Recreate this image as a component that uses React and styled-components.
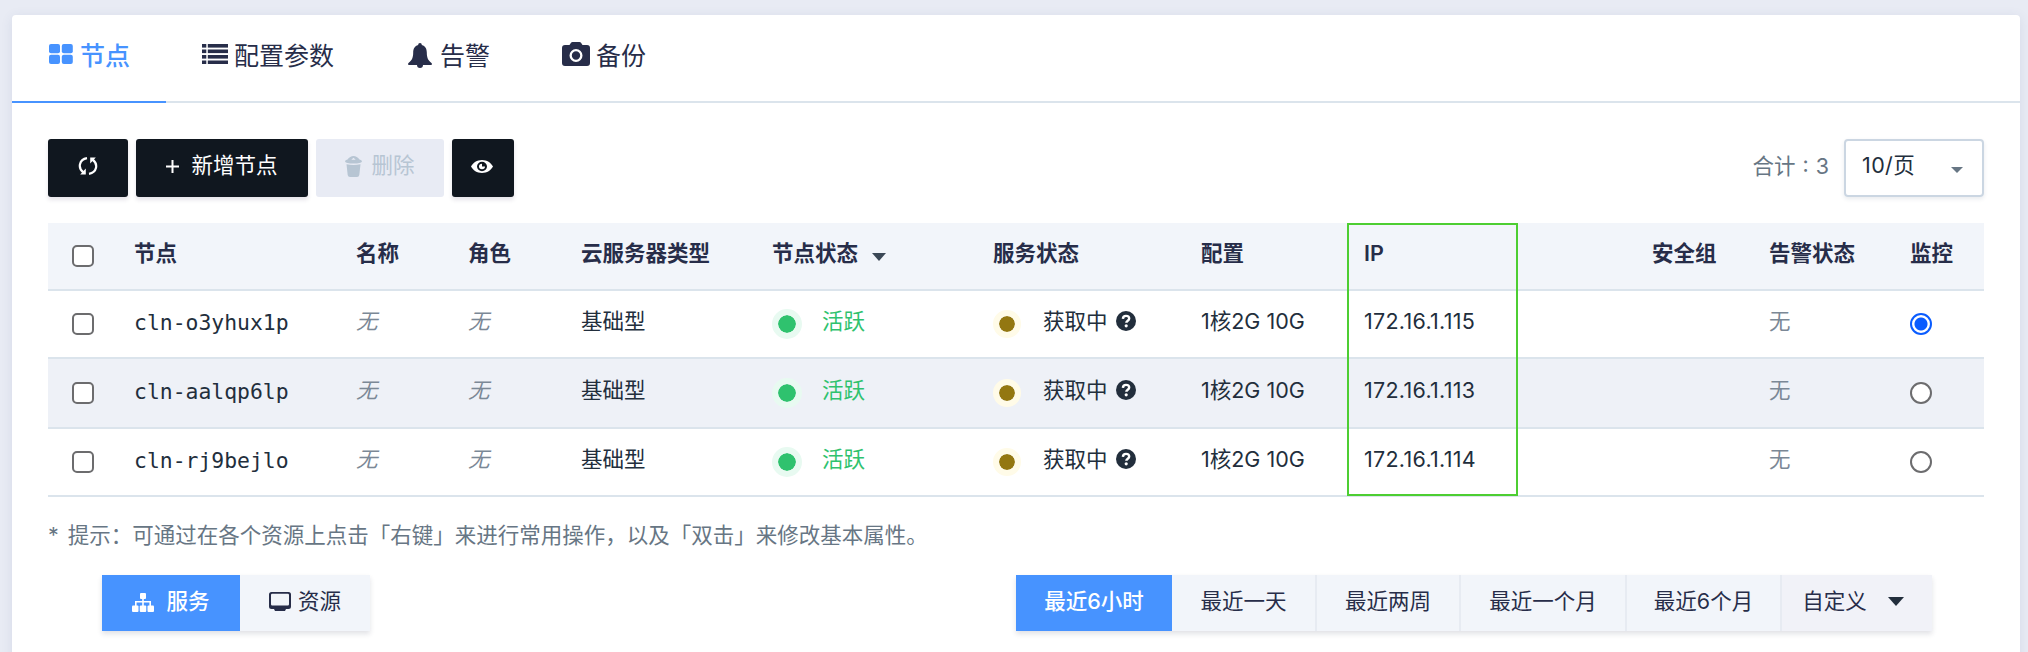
import React from 'react';
import styled, { createGlobalStyle, css } from 'styled-components';

const Global = createGlobalStyle`
  *, *::before, *::after { box-sizing: border-box; }
  body {
    margin: 0;
    height: 652px;
    overflow: hidden;
    background: #e8ebf4;
    color: #222e3c;
    font: 21.5px/30px Inter, "Noto Sans CJK SC", sans-serif;
  }
`;

const Panel = styled.main`
  height: 660px;
  margin: 15px 8px 0 12px;
  background: #fff;
  border-radius: 4px;
  box-shadow: 0 2px 12px rgba(60, 80, 130, 0.1);
`;

const Tabs = styled.nav`
  display: flex;
  height: 88px;
  border-bottom: 2px solid #dbe4ec;
`;

const Tab = styled.a`
  display: flex;
  align-items: center;
  gap: ${(p) => p.$gap}px;
  width: ${(p) => p.$width}px;
  height: 88px;
  padding: 0 0 4px 36px;
  font-size: 25px;
  white-space: nowrap;
  color: ${(p) => (p.$active ? '#4793ff' : '#272d49')};
  font-weight: ${(p) => (p.$active ? 500 : 400)};
  border-bottom: 2px solid ${(p) => (p.$active ? '#4793ff' : 'transparent')};
`;

const Toolbar = styled.div`
  display: flex;
  gap: 8px;
  padding: 36px 36px 0;
`;

const Button = styled.button`
  display: flex;
  align-items: center;
  justify-content: center;
  gap: ${(p) => p.$gap || 0}px;
  width: ${(p) => p.$width}px;
  height: 58px;
  padding: 0 ${(p) => p.$right || 0}px 4px 0;
  border: 0;
  border-radius: 3px;
  font: inherit;
  color: ${(p) => (p.$disabled ? '#b7c5d3' : '#fff')};
  background: ${(p) => (p.$disabled ? '#e8ebf4' : '#10171f')};
  box-shadow: ${(p) => (p.$disabled ? 'none' : '0 3px 4px rgba(50, 30, 80, 0.12)')};
`;

const Label = styled.span`
  padding-bottom: 2px;
`;

const Paging = styled.div`
  display: flex;
  align-items: center;
  gap: 15px;
  margin-left: auto;
  color: #677684;
`;

const Total = styled.span`
  padding-bottom: 5px;
  word-spacing: 1px;
`;

const Select = styled.div`
  display: flex;
  align-items: center;
  justify-content: space-between;
  width: 140px;
  height: 58px;
  padding: 0 19px 6px 16px;
  color: #222e3c;
  letter-spacing: 0.4px;
  border: 2px solid #cbd6e2;
  border-radius: 4px;
  box-shadow: 0 2px 4px rgba(40, 60, 90, 0.1);
`;

const Caret = styled.i`
  width: 0;
  height: 0;
  border: solid transparent;
  border-width: ${(p) => p.$h}px ${(p) => p.$w / 2}px 0;
  border-top-color: ${(p) => p.$color};
  margin: ${(p) => p.$margin};
`;

const TableWrap = styled.section`
  position: relative;
  margin: 26px 36px 0;
`;

const Row = styled.div`
  display: grid;
  grid-template-columns: 86px 222px 112px 113px 191px 221px 208px 163px 288px 117px 141px 1fr;
  align-items: center;
  height: ${(p) => p.$height}px;
  background: ${(p) => p.$bg};
  border-bottom: 2px solid #dbe4ec;
  white-space: nowrap;
  ${(p) => p.$head && css`
    color: #272d49;
    font-weight: 600;
  `}
`;

const Cell = styled.div`
  display: flex;
  align-items: center;
  height: 30px;
  margin-top: -7px;
`;

const Address = styled(Cell)`
  letter-spacing: 0.28px;
`;

const BoxCell = styled(Cell)`
  margin-top: 0;
  padding-left: ${(p) => p.$pad || 0}px;
`;

const Name = styled(Cell)`
  margin-top: -2px;
  font-family: "DejaVu Sans Mono", monospace;
  font-size: 21.4px;
`;

const None = styled(Cell)`
  color: #7b8896;
  font-style: ${(p) => (p.$italic ? 'italic' : 'normal')};
`;

const Check = styled.span`
  width: 22px;
  height: 22px;
  border: 2px solid #6c6c6e;
  border-radius: 5px;
  background: #fff;
`;

const Radio = styled(Check)`
  border-radius: 50%;
  ${(p) => p.$on && css`
    border-color: #0a5cff;
    background: radial-gradient(circle, #0a5cff 6px, #fff 7px);
  `}
`;

const StatusDot = styled.span`
  flex: none;
  width: ${(p) => p.$size}px;
  height: ${(p) => p.$size}px;
  margin: 6px ${(p) => p.$gap}px 0 0;
  border-radius: 50%;
  border: 6px solid ${(p) => p.$halo};
  background: ${(p) => p.$color};
  background-clip: padding-box;
`;

const Active = styled.span`
  color: #2fc26e;
`;

const Highlight = styled.div`
  position: absolute;
  top: 0;
  left: 1299px;
  width: 171px;
  height: 273px;
  border: 2px solid #4dce32;
`;

const Tip = styled.p`
  display: flex;
  gap: 9px;
  margin: 23px 36px 0;
  height: 30px;
  color: #677684;
  white-space: pre;
`;

const Charts = styled.div`
  display: flex;
  justify-content: space-between;
  margin: 25px 88px 0 90px;
`;

const Segments = styled.div`
  display: flex;
  box-shadow: 0 3px 5px rgba(40, 50, 80, 0.14);
`;

const Segment = styled.div`
  display: flex;
  align-items: center;
  justify-content: center;
  gap: ${(p) => p.$gap || 0}px;
  width: ${(p) => p.$width}px;
  height: 56px;
  padding: 0 ${(p) => p.$right || 0}px 4px 0;
  white-space: nowrap;
  color: ${(p) => (p.$active ? '#fff' : '#272d49')};
  font-weight: ${(p) => (p.$active ? 500 : 400)};
  background: ${(p) => (p.$active ? '#4793ff' : p.$menu ? '#f1f2f8' : '#f2f5fa')};
  border-left: ${(p) => (p.$divider ? '2px solid #e7ebf2' : '0')};
`;

const Svg = styled.svg`
  display: block;
  flex: none;
  fill: currentColor;
  margin: ${(p) => p.$margin || 0};
`;

const GridIcon = () => (
  <Svg width="24" height="20" viewBox="0 0 24 20" $margin="-5px 0 0 1px">
    <rect width="11" height="9.200" rx="2" /><rect x="12.800" width="11" height="9.200" rx="2" />
    <rect y="10.800" width="11" height="9.200" rx="2" /><rect x="12.800" y="10.800" width="11" height="9.200" rx="2" />
  </Svg>
);
const ListIcon = () => (
  <Svg width="26" height="20" viewBox="0 0 26 20" $margin="-5px 0 0">
    {[0, 5.5, 11, 16.5].map((y) => (
      <React.Fragment key={y}><rect y={y} width="4.300" height="3.600" /><rect x="5.800" y={y} width="20.200" height="3.600" /></React.Fragment>
    ))}
  </Svg>
);
const BellIcon = () => (
  <Svg width="24" height="25" viewBox="0 0 24 25" $margin="-2px 0 0">
    <path d="M12 0c1.200 0 1.800.8 1.800 2 3.600 1 5 4 5 7.500 0 5.500 1.500 8 4.700 10.500.8.800.4 2-.7 2H15a3 3 0 0 1-6 0H1.200C.1 22-.3 20.800.5 20 3.700 17.500 5.200 15 5.200 9.500c0-3.500 1.400-6.500 5-7.500 0-1.200.6-2 1.800-2z" />
  </Svg>
);
const CameraIcon = () => (
  <Svg width="28" height="24" viewBox="0 0 28 24" $margin="-4px 0 0">
    <path fillRule="evenodd" d="M3 3h4.500L9 .8Q9.500 0 10.500 0h7q1 0 1.500.8L20.500 3H25q3 0 3 3v15q0 3-3 3H3q-3 0-3-3V6q0-3 3-3zM14 7a6.500 6.500 0 1 0 0 13 6.500 6.500 0 1 0 0-13zM14 9.300a4.200 4.200 0 1 1 0 8.400 4.200 4.200 0 1 1 0-8.400z" />
  </Svg>
);
const RefreshIcon = () => (
  <Svg width="20" height="18" viewBox="0 0 20 18">
    <g fill="none" stroke="currentColor" strokeWidth="2.200">
      <path d="M9 1.200C1 2.500-.5 11 5.500 15.500M11 16.800C19 15.500 20.500 7 14.500 2.500" />
    </g>
    <path d="M2.200 17.500H7.800V11.500zM17.800.5H12.200V6.500z" />
  </Svg>
);
const PlusIcon = () => (
  <Svg width="13" height="13" viewBox="0 0 13 13"><path d="M5.500 0h2v5.500H13v2H7.500V13h-2V7.500H0v-2h5.500z" /></Svg>
);
const TrashIcon = () => (
  <Svg width="17" height="21" viewBox="0 0 17 21">
    <path fillRule="evenodd" d="M0 5.500q0-1.500 2.500-2Q5 0 8.500 0T14.500 3.500q2.500.5 2.500 2Q16 7.500 8.500 7.500T0 5.500zM6.300 3.700h4.400L8.500 1.800zM1.500 8.300Q8.500 9.600 15.500 8.300L14.300 19q-.3 2-2.300 2H5q-2 0-2.300-2z" />
  </Svg>
);
const EyeIcon = () => (
  <Svg width="22" height="13" viewBox="0 0 22 14" preserveAspectRatio="none">
    <path fillRule="evenodd" d="M11 0c5 0 9 3 11 7-2 4-6 7-11 7S2 11 0 7c2-4 6-7 11-7zM11 2a5 5 0 1 0 0 10 5 5 0 1 0 0-10zM11 4v3h3a3 3 0 1 1-3-3z" />
  </Svg>
);
const HelpIcon = () => (
  <Svg width="20" height="20" viewBox="0 0 20 20" $margin="1px 0 0 8px">
    <circle cx="10" cy="10" r="10" />
    <path d="M6.900 7.900C7 5.800 8.300 4.900 10 4.900s3.200 1 3.200 2.600c0 2.200-2.900 2.200-2.900 4.300" fill="none" stroke="#fff" strokeWidth="2.400" />
    <circle cx="10.200" cy="14.800" r="1.600" fill="#fff" />
  </Svg>
);
const SitemapIcon = () => (
  <Svg width="22" height="19" viewBox="0 0 22 19" $margin="3px 0 0">
    <rect x="8" width="6" height="6" rx="1" />
    <path d="M10.200 5h1.600v3H19v5h-1.600V9.600h-5.600V13h-1.600V9.600H4.600V13H3V8h7.200z" />
    <rect y="12.500" width="6.500" height="6.500" rx="1" /><rect x="7.750" y="12.500" width="6.500" height="6.500" rx="1" /><rect x="15.500" y="12.500" width="6.500" height="6.500" rx="1" />
  </Svg>
);
const MonitorIcon = () => (
  <Svg width="22" height="19" viewBox="0 0 22 19" $margin="1px 0 0">
    <path fillRule="evenodd" d="M2.500 0h17Q22 0 22 2.500v12q0 2.500-2.500 2.500H17l-1 2H6l-1-2H2.500Q0 17 0 14.500v-12Q0 0 2.500 0zM3.200 1.800Q2 1.800 2 3v9.300q0 1.200 1.200 1.200h15.600q1.200 0 1.200-1.200V3q0-1.200-1.200-1.200z" />
  </Svg>
);

const nodes = [
  { id: 'cln-o3yhux1p', ip: '172.16.1.115', height: 68, on: true },
  { id: 'cln-aalqp6lp', ip: '172.16.1.113', height: 70, bg: '#eef1f7' },
  { id: 'cln-rj9bejlo', ip: '172.16.1.114', height: 68 },
];

const ranges = [
  ['最近一天', 143], ['最近两周', 144], ['最近一个月', 166], ['最近6个月', 155],
];

export default function App() {
  return (
    <>
      <Global />
      <Panel>
        <Tabs>
          <Tab $active $gap={7} $width={154}><GridIcon />节点</Tab>
          <Tab $gap={6} $width={206}><ListIcon />配置参数</Tab>
          <Tab $gap={8} $width={154}><BellIcon />告警</Tab>
          <Tab $gap={6} $width={160}><CameraIcon />备份</Tab>
        </Tabs>
        <Toolbar>
          <Button $width={80}><RefreshIcon /></Button>
          <Button $width={172} $gap={12}><PlusIcon /><Label>新增节点</Label></Button>
          <Button $width={128} $gap={9} $disabled><TrashIcon /><Label>删除</Label></Button>
          <Button $width={62} $right={3}><EyeIcon /></Button>
          <Paging>
            <Total>合计 : 3</Total>
            <Select>10/页<Caret $w={13} $h={6} $color="#677684" $margin="10px 0 0" /></Select>
          </Paging>
        </Toolbar>
        <TableWrap>
          <Row $head $height={68} $bg="#f2f5fa">
            <BoxCell $pad={24}><Check /></BoxCell>
            <Cell>节点</Cell>
            <Cell>名称</Cell>
            <Cell>角色</Cell>
            <Cell>云服务器类型</Cell>
            <Cell>节点状态<Caret $w={14} $h={8} $color="#3b4856" $margin="8px 0 0 14px" /></Cell>
            <Cell>服务状态</Cell>
            <Cell>配置</Cell>
            <Cell>IP</Cell>
            <Cell>安全组</Cell>
            <Cell>告警状态</Cell>
            <Cell>监控</Cell>
          </Row>
          {nodes.map((n) => (
            <Row key={n.id} $height={n.height} $bg={n.bg || '#fff'}>
              <BoxCell $pad={24}><Check /></BoxCell>
              <Name>{n.id}</Name>
              <None $italic>无</None>
              <None $italic>无</None>
              <Cell>基础型</Cell>
              <Cell><StatusDot $size={30} $gap={20} $halo="#e8faf1" $color="#2fc26e" /><Active>活跃</Active></Cell>
              <Cell><StatusDot $size={28} $gap={22} $halo="#fffbe8" $color="#937711" />获取中<HelpIcon /></Cell>
              <Cell>1核2G 10G</Cell>
              <Address>{n.ip}</Address>
              <Cell />
              <None>无</None>
              <BoxCell><Radio $on={n.on} /></BoxCell>
            </Row>
          ))}
          <Highlight />
        </TableWrap>
        <Tip><span>*</span><span>提示：可通过在各个资源上点击「右键」来进行常用操作，以及「双击」来修改基本属性。</span></Tip>
        <Charts>
          <Segments>
            <Segment $active $width={138} $gap={12}><SitemapIcon />服务</Segment>
            <Segment $width={130} $gap={7}><MonitorIcon />资源</Segment>
          </Segments>
          <Segments>
            <Segment $active $width={156}>最近6小时</Segment>
            {ranges.map(([label, width], i) => (
              <Segment key={label} $width={width} $divider={i > 0}>{label}</Segment>
            ))}
            <Segment $width={152} $gap={21} $right={8} $menu $divider>
              自定义<Caret $w={16} $h={9} $color="#222e3c" $margin="0" />
            </Segment>
          </Segments>
        </Charts>
      </Panel>
    </>
  );
}
